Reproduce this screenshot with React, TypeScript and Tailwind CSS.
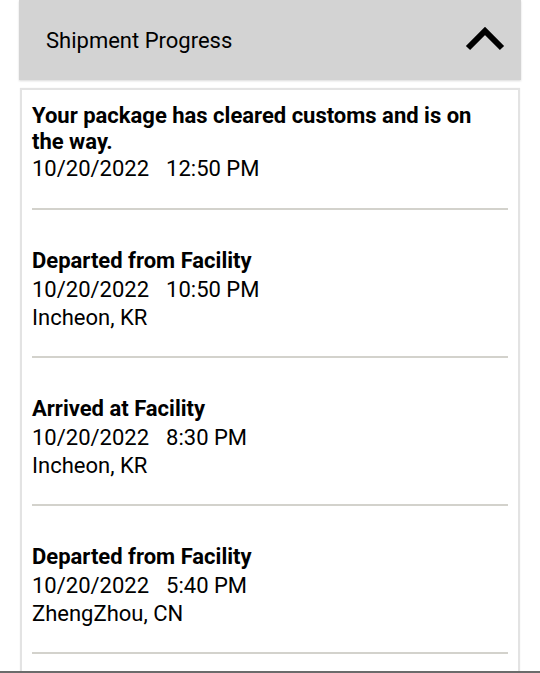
import React from "react";

type Item = { title: string; date: string; time: string; loc?: string };

const items: Item[] = [
  { title: "Your package has cleared customs and is on the way.", date: "10/20/2022", time: "12:50 PM" },
  { title: "Departed from Facility", date: "10/20/2022", time: "10:50 PM", loc: "Incheon, KR" },
  { title: "Arrived at Facility", date: "10/20/2022", time: "8:30 PM", loc: "Incheon, KR" },
  { title: "Departed from Facility", date: "10/20/2022", time: "5:40 PM", loc: "ZhengZhou, CN" },
];

export default function App() {
  return (
    <div className="relative h-[673px] overflow-hidden bg-white text-black" style={{ fontFamily: "Roboto, 'Liberation Sans', sans-serif" }}>
      <div className="mx-[19px] flex h-[80px] items-center justify-between bg-[#d3d3d3] pl-[27px] pr-[15px] shadow-[0_1px_2px_rgba(0,0,0,0.15)]">
        <span className="text-[22px]">Shipment Progress</span>
        <svg width="42" height="26" viewBox="0 0 42 26" className="mt-[-2px]">
          <path d="M4 22 L21 5 L38 22" fill="none" stroke="#000" strokeWidth="6" strokeLinecap="butt" strokeLinejoin="miter" />
        </svg>
      </div>
      <div className="mx-[20px] mt-[8px] border-2 border-[#e3e3e3] bg-white px-[10px] shadow-[0_0_1px_rgba(0,0,0,0.1)]">
        {items.map((it, i) => (
          <div key={i} className={`${i === 0 ? "pt-[13px] pb-[25px]" : "pt-[38px] pb-[24px]"} border-b-2 border-[#d3d2cc]`}>
            <div className="text-[22px] font-bold leading-[26px]">{it.title}</div>
            <div className={`${i === 0 ? "" : "mt-[2px]"} text-[22px] leading-[28px]`}>
              <span>{it.date}</span>
              <span className="ml-[17px]">{it.time}</span>
            </div>
            {it.loc && <div className="text-[22px] leading-[28px]">{it.loc}</div>}
          </div>
        ))}
        <div className="h-[60px]" />
      </div>
      <div className="absolute bottom-0 left-0 h-[2px] w-full bg-[#6b6b6b]" />
    </div>
  );
}
